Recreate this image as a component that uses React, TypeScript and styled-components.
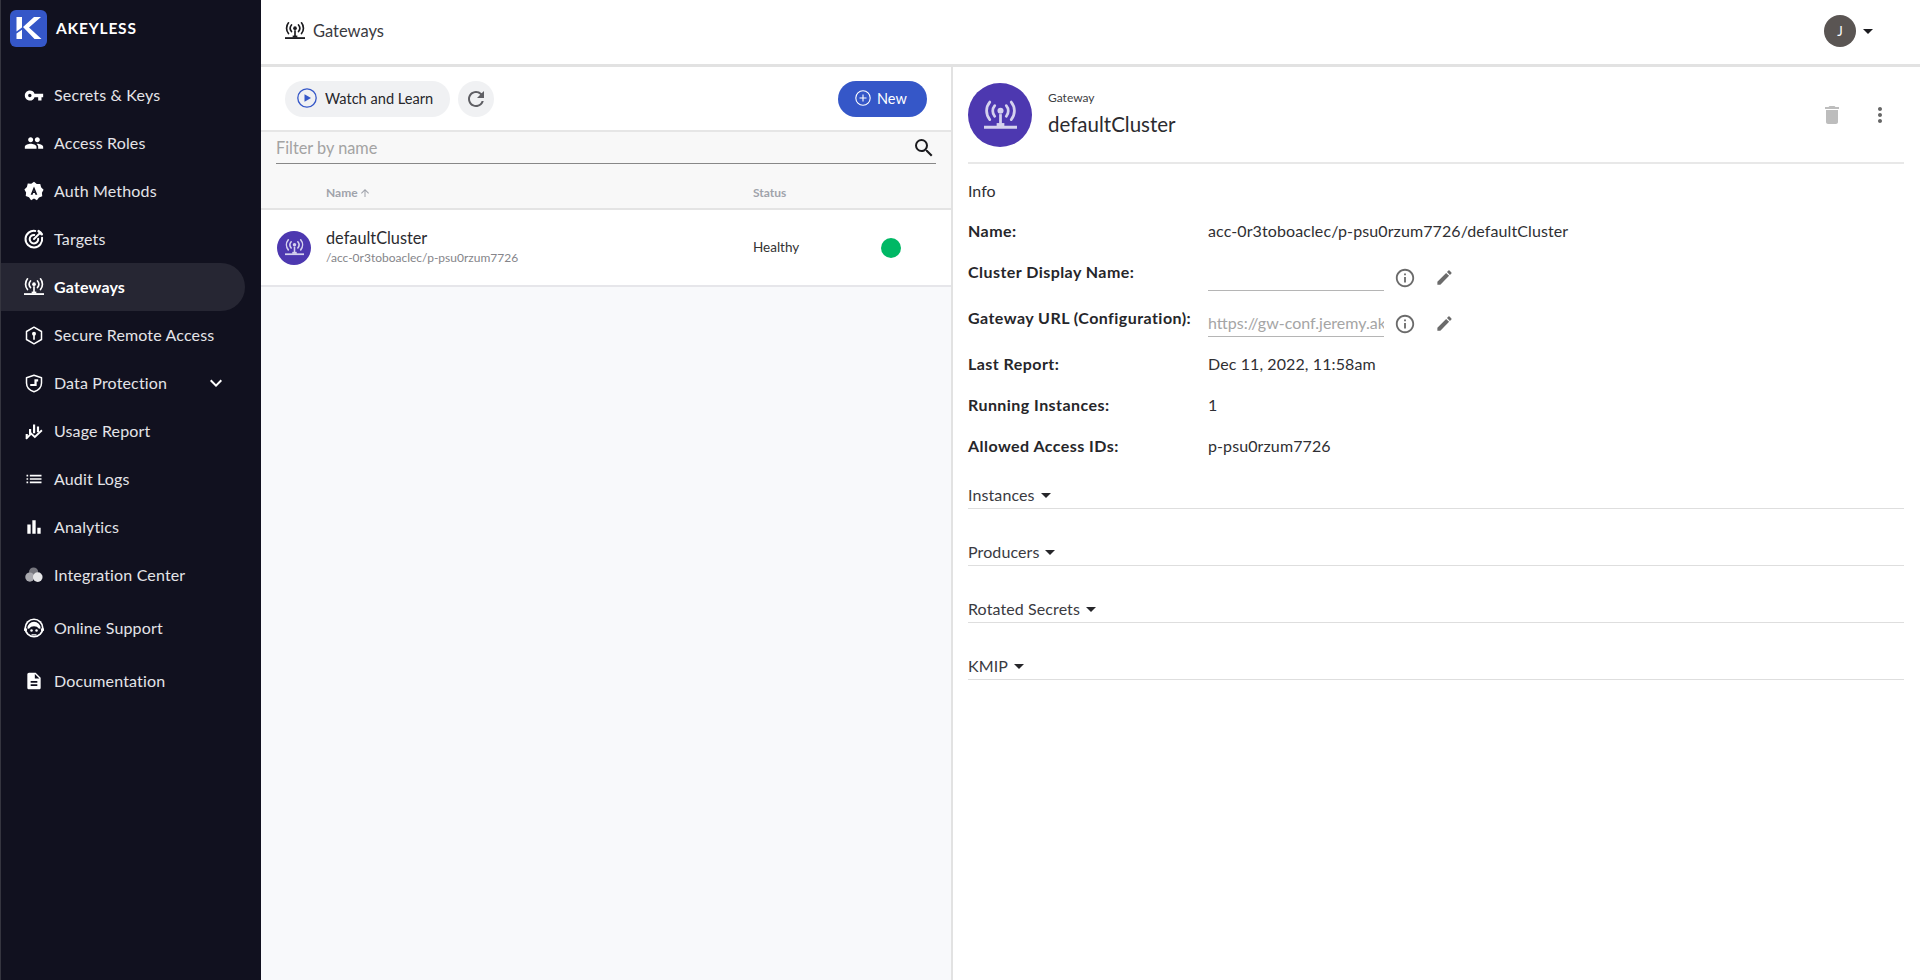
import * as React from "react";
import styled, { createGlobalStyle } from "styled-components";
import {
  MdVpnKey, MdPeople, MdList, MdBarChart, MdDescription, MdExpandMore, MdRefresh, MdSearch,
  MdDelete, MdMoreVert, MdEdit, MdInfoOutline, MdArrowUpward, MdArrowDropDown,
} from "react-icons/md";

const FONT = `"Lato", "Open Sans", sans-serif`;

const GlobalStyle = createGlobalStyle`
  html, body { margin: 0; padding: 0; height: 100%; }
  body { font-family: ${FONT}; color: #2b2b2f; background: #fff; }
  * { box-sizing: border-box; }
`;

const GatewayIcon = ({ size = 20, color = "currentColor" }: { size?: number; color?: string }) => (
  <svg width={size} height={size} viewBox="0 0 24 24" fill="none">
    <circle cx="12" cy="8.6" r="2.200" fill={color} />
    <path d="M7.800 4.800a6 6 0 0 0 0 7.800M16.200 4.800a6 6 0 0 1 0 7.800" stroke={color} strokeWidth="2" strokeLinecap="round" />
    <path d="M4.200 2.200a10 10 0 0 0 0 12.800M19.800 2.200a10 10 0 0 1 0 12.800" stroke={color} strokeWidth="2" strokeLinecap="round" />
    <path d="M11 11h2v7h-2z" fill={color} />
    <path d="M0 19.400h24v2.200H0z" fill={color} />
    <path d="M9.200 17.500h5.600v2.500H9.200z" fill={color} />
  </svg>
);

const AuthIcon = () => (
  <svg width="20" height="20" viewBox="0 0 24 24">
    <path fill="#fff" fillRule="evenodd" d="M12 1l3.300 2.600 4.200-.1 1 4 3 3-2 3.700.4 4.200-3.900 1.500L15.500 23 12 21l-3.500 2-2.500-3.500-3.900-1.500.4-4.200-2-3.700 3-3 1-4 4.200.1z M12 6.500 8 16.500h2.300l.7-2h2l.7 2H16z M11.600 12.700l.4-1.700.4 1.700z" />
  </svg>
);

const TargetIcon = () => (
  <svg width="22" height="22" viewBox="0 0 24 24" fill="none" stroke="#fff" strokeWidth="2.400" strokeLinecap="round">
    <path d="M21.700 10.500A10 10 0 1 1 13.500 2.300" />
    <path d="M17 11.800a5.100 5.100 0 1 1-4.700-4.700" />
    <path d="M12 12l8-8" />
    <path d="M17.500 2.500l3.800 3.800" strokeWidth="3" />
  </svg>
);

const RemoteIcon = () => (
  <svg width="21" height="21" viewBox="0 0 24 24" fill="none">
    <path d="M12 2l9 5.200v9.600L12 22l-9-5.200V7.200z" stroke="#fff" strokeWidth="1.800" strokeLinejoin="round" />
    <circle cx="12" cy="9.800" r="2.400" fill="#fff" />
    <path d="M11 11h2v6h-2z" fill="#fff" />
  </svg>
);

const ShieldIcon = () => (
  <svg width="21" height="21" viewBox="0 0 24 24" fill="none">
    <path d="M12 2l9 3v6.500c0 5-3.800 8.800-9 10.500-5.200-1.700-9-5.500-9-10.500V5z" stroke="#fff" strokeWidth="1.800" strokeLinejoin="round" />
    <path d="M7.500 12.500h5V7H17v2.500h-1.800V15H7.500z" fill="#fff" />
  </svg>
);

const UsageIcon = () => (
  <svg width="21" height="21" viewBox="0 0 24 24" fill="#fff">
    <path d="M6 9h2.600v6H6zM10.800 3.500h2.600v10.500h-2.600zM15.500 6h2.600v7h-2.600z" />
    <path d="M2.500 21l6-6.500 4.500 4 8.500-8" fill="none" stroke="#fff" strokeWidth="2.200" />
    <path d="M2 15h2.600v5H2z" />
  </svg>
);

const IntegrationIcon = () => (
  <svg width="20" height="20" viewBox="0 0 24 24">
    <circle cx="11.500" cy="8.500" r="5.500" fill="#77777f" />
    <circle cx="7" cy="14.500" r="5.500" fill="#a9a9af" />
    <circle cx="16.500" cy="14.500" r="5.800" fill="#e6e6e8" />
  </svg>
);

const SupportIcon = () => (
  <svg width="22" height="22" viewBox="0 0 24 24">
    <circle cx="12" cy="12" r="11.500" fill="#fff" />
    <circle cx="12" cy="12" r="9.500" fill="#11111f" />
    <path d="M4 12.500a8 8 0 0 1 16 0l-2 .5c-1.500-2-3.500-3-6-3s-4.500 1-6 3z" fill="#fff" />
    <circle cx="1.800" cy="14" r="2" fill="#fff" />
    <circle cx="22.200" cy="14" r="2" fill="#fff" />
    <circle cx="9" cy="15" r="1.500" fill="#fff" />
    <circle cx="15" cy="15" r="1.500" fill="#fff" />
    <path d="M9 19.500h6v1.500H9z" fill="#fff" />
  </svg>
);

const LogoMark = () => (
  <svg width="37" height="37" viewBox="0 0 37 37">
    <rect width="37" height="37" rx="6" fill="#3557c8" />
    <path d="M6.500 7H12v10.500l-5.500 4zM6.500 23.500 12 19.700V29H6.500z" fill="#fff" />
    <path d="M13 17 24 7h7L19 17.500 31.500 29H24.500z" fill="#fff" />
  </svg>
);

const Page = styled.div`
  display: flex;
  width: 1920px;
  height: 980px;
  overflow: hidden;
  font-size: 16px;
`;

const Sidebar = styled.aside`
  width: 261px;
  flex-shrink: 0;
  background: #11111f;
  border-left: 1px solid #35353f;
  display: flex;
  flex-direction: column;
`;

const Brand = styled.div`
  height: 71px;
  padding: 10px 0 0 9px;
  display: flex;
  align-items: flex-start;
  gap: 9px;
`;

const BrandName = styled.span`
  color: #fff;
  font-weight: 700;
  font-size: 15.500px;
  letter-spacing: 0.800px;
  line-height: 36px;
`;

const NavItem = styled.div<{ $active?: boolean; $gapTop?: number }>`
  height: 48px;
  width: 244px;
  margin-top: ${(p) => p.$gapTop ?? 0}px;
  padding: 0 17px 0 23px;
  display: flex;
  align-items: center;
  gap: 10px;
  color: ${(p) => (p.$active ? "#fff" : "#e4e4e8")};
  font-weight: ${(p) => (p.$active ? 700 : 400)};
  font-size: 16px;
  letter-spacing: 0.150px;
  background: ${(p) => (p.$active ? "#262633" : "transparent")};
  border-radius: ${(p) => (p.$active ? "0 24px 24px 0" : "0")};
`;

const NavIcon = styled.span`
  width: 20px;
  height: 20px;
  display: flex;
  align-items: center;
  justify-content: center;
  color: #fff;
  flex-shrink: 0;
`;

const NavLabel = styled.span`
  flex: 1;
  white-space: nowrap;
  margin-top: -2px;
`;

const Main = styled.main`
  flex: 1;
  display: flex;
  flex-direction: column;
  min-width: 0;
`;

const TopBar = styled.header`
  height: 67px;
  flex-shrink: 0;
  border-bottom: 3px solid #e2e2e2;
  display: flex;
  align-items: center;
  padding: 0 40px 3px 24px;
  gap: 8px;
  font-size: 16.500px;
  color: #3a3a3f;
`;

const Spacer = styled.div`
  flex: 1;
`;

const UserAvatar = styled.div`
  width: 32px;
  height: 32px;
  border-radius: 50%;
  background: #5a5553;
  color: #fff;
  font-size: 13px;
  display: flex;
  align-items: center;
  justify-content: center;
`;

const UserCaret = styled.span`
  display: flex;
  margin-left: -8px;
  color: #1b1b1f;
`;

const Panels = styled.div`
  flex: 1;
  display: flex;
  min-height: 0;
`;

const ListPanel = styled.section`
  width: 692px;
  flex-shrink: 0;
  border-right: 2px solid #e2e2e2;
  display: flex;
  flex-direction: column;
  background: #f8f9fb;
`;

const Toolbar = styled.div`
  height: 65px;
  background: #fff;
  border-bottom: 2px solid #e6e6e6;
  padding: 14px 24px 0 24px;
  display: flex;
  align-items: flex-start;
  gap: 8px;
`;

const PillButton = styled.button`
  height: 36px;
  padding: 0 17px 2px 12px;
  border: 0;
  border-radius: 18px;
  background: #f0f1f3;
  color: #26262a;
  font-family: ${FONT};
  font-size: 14.600px;
  display: flex;
  align-items: center;
  gap: 8px;
`;

const RoundButton = styled.button`
  width: 36px;
  height: 36px;
  padding: 0;
  border: 0;
  border-radius: 50%;
  background: #f0f1f3;
  color: #5f5f64;
  display: flex;
  align-items: center;
  justify-content: center;
`;

const NewButton = styled.button`
  height: 36px;
  width: 89px;
  margin-left: auto;
  padding: 0 0 2px 17px;
  border: 0;
  border-radius: 18px;
  background: #3557c8;
  color: #fff;
  font-family: ${FONT};
  font-size: 14.500px;
  display: flex;
  align-items: center;
  gap: 6px;
`;

const FilterBand = styled.div`
  background: #f8f8f8;
  padding: 0 15px 0 15px;
`;

const FilterField = styled.div`
  height: 32px;
  display: flex;
  align-items: center;
  justify-content: space-between;
  border-bottom: 1px solid #888;
  color: #a3a3a3;
  font-size: 16.300px;
  svg { color: #1b1b1f; }
`;

const TableGrid = styled.div`
  display: grid;
  grid-template-columns: 65px 427px 1fr;
  align-items: center;
`;

const TableHead = styled(TableGrid)`
  height: 46px;
  background: #f8f8f8;
  border-bottom: 2px solid #e4e4e4;
  color: #a0a3ab;
  font-size: 12px;
  font-weight: 700;
  padding-top: 13px;
`;

const SortLabel = styled.span`
  display: flex;
  align-items: center;
  gap: 1px;
`;

const TableRow = styled(TableGrid)`
  height: 77px;
  background: #fff;
  border-bottom: 2px solid #e6e6ea;
`;

const RowLeading = styled.div`
  padding-left: 16px;
`;

const Avatar = styled.div<{ $size: number }>`
  width: ${(p) => p.$size}px;
  height: ${(p) => p.$size}px;
  border-radius: 50%;
  background: #4d38b0;
  color: #d5d2ee;
  display: flex;
  align-items: center;
  justify-content: center;
  flex-shrink: 0;
`;

const RowText = styled.div`
  padding-top: 0;
`;

const RowName = styled.div`
  font-size: 16.300px;
  line-height: 20px;
  color: #2b2b2f;
`;

const RowPath = styled.div`
  font-size: 12px;
  line-height: 20px;
  color: #85858a;
`;

const StatusCell = styled.div`
  display: flex;
  align-items: center;
  justify-content: space-between;
  padding-right: 50px;
  font-size: 13.500px;
  color: #333;
`;

const StatusLabel = styled.span`
  margin-top: -2px;
`;

const StatusDot = styled.span`
  width: 20px;
  height: 20px;
  border-radius: 50%;
  background: #00b865;
`;

const DetailPanel = styled.section`
  flex: 1;
  min-width: 0;
  padding: 16px 16px 0 15px;
  display: flex;
  flex-direction: column;
`;

const DetailHead = styled.div`
  height: 81px;
  border-bottom: 2px solid #e8e8e8;
  display: flex;
  align-items: flex-start;
  gap: 16px;
`;

const TitleBlock = styled.div`
  padding-top: 7px;
  flex: 1;
`;

const TitleKicker = styled.div`
  font-size: 12px;
  line-height: 16px;
  color: #3d3d42;
`;

const TitleName = styled.div`
  font-size: 20.500px;
  line-height: 28px;
  margin-top: 4px;
  color: #2b2b2f;
`;

const HeadActions = styled.div`
  display: flex;
  gap: 24px;
  padding: 20px 12px 0 0;
`;

const InfoTitle = styled.div`
  margin: 17px 0 9px;
  font-size: 16px;
  line-height: 20px;
  color: #2f2f33;
`;

const FieldRow = styled.div<{ $height: number }>`
  display: grid;
  grid-template-columns: 240px 176px auto;
  align-items: center;
  height: ${(p) => p.$height}px;
`;

const FieldLabel = styled.div<{ $raised?: boolean }>`
  font-weight: 700;
  letter-spacing: 0.450px;
  color: #26262a;
  white-space: nowrap;
  padding-bottom: ${(p) => (p.$raised ? 6 : 0)}px;
`;

const FieldValue = styled.div`
  white-space: nowrap;
  letter-spacing: 0.100px;
  color: #2f2f33;
`;

const FieldInput = styled.div`
  height: 32px;
  margin-top: 2px;
  padding-top: 2px;
  line-height: 32px;
  border-bottom: 1px solid #b5b5b5;
  color: #a5a5a5;
  overflow: hidden;
  white-space: nowrap;
`;

const FieldTools = styled.div`
  display: flex;
  align-items: center;
  gap: 19px;
  padding: 7px 0 0 10px;
  color: #6b6b6b;
`;

const SectionList = styled.div`
  margin-top: -14px;
`;

const SectionHead = styled.div`
  height: 57px;
  padding-bottom: 1px;
  display: flex;
  align-items: flex-end;
  border-bottom: 1px solid #dedede;
  font-size: 16px;
  letter-spacing: 0.100px;
  line-height: 24px;
  color: #3a3a3f;
  svg { color: #26262a; margin-left: -1px; }
`;

const NAV = [
  { label: "Secrets & Keys", icon: <MdVpnKey size={21} /> },
  { label: "Access Roles", icon: <MdPeople size={22} /> },
  { label: "Auth Methods", icon: <AuthIcon /> },
  { label: "Targets", icon: <TargetIcon /> },
  { label: "Gateways", icon: <GatewayIcon />, active: true },
  { label: "Secure Remote Access", icon: <RemoteIcon /> },
  { label: "Data Protection", icon: <ShieldIcon />, more: true },
  { label: "Usage Report", icon: <UsageIcon /> },
  { label: "Audit Logs", icon: <MdList size={20} /> },
  { label: "Analytics", icon: <MdBarChart size={20} /> },
  { label: "Integration Center", icon: <IntegrationIcon /> },
  { label: "Online Support", icon: <SupportIcon />, gapTop: 5 },
  { label: "Documentation", icon: <MdDescription size={20} />, gapTop: 5 },
];

export default function App() {
  return (
    <Page>
      <GlobalStyle />
      <Sidebar>
        <Brand>
          <LogoMark />
          <BrandName>AKEYLESS</BrandName>
        </Brand>
        {NAV.map((item) => (
          <NavItem key={item.label} $active={item.active} $gapTop={item.gapTop}>
            <NavIcon>{item.icon}</NavIcon>
            <NavLabel>{item.label}</NavLabel>
            {item.more && <MdExpandMore size={24} color="#fff" />}
          </NavItem>
        ))}
      </Sidebar>
      <Main>
        <TopBar>
          <GatewayIcon size={20} color="#1b1b1f" />
          <span>Gateways</span>
          <Spacer />
          <UserAvatar>J</UserAvatar>
          <UserCaret><MdArrowDropDown size={24} /></UserCaret>
        </TopBar>
        <Panels>
          <ListPanel>
            <Toolbar>
              <PillButton>
                <svg width="20" height="20" viewBox="0 0 20 20" fill="none">
                  <circle cx="10" cy="10" r="9.200" stroke="#3557c8" strokeWidth="1.300" />
                  <path d="M7.500 6.300 14 10l-6.500 3.700z" fill="#3557c8" />
                </svg>
                Watch and Learn
              </PillButton>
              <RoundButton><MdRefresh size={24} /></RoundButton>
              <NewButton>
                <svg width="16" height="16" viewBox="0 0 16 16" fill="none" stroke="#fff" strokeWidth="1.100">
                  <circle cx="8" cy="8" r="7.200" />
                  <path d="M8 4.500v7M4.500 8h7" />
                </svg>
                New
              </NewButton>
            </Toolbar>
            <FilterBand>
              <FilterField>
                Filter by name
                <MdSearch size={24} />
              </FilterField>
            </FilterBand>
            <TableHead>
              <span />
              <SortLabel>Name <MdArrowUpward size={12} /></SortLabel>
              <span>Status</span>
            </TableHead>
            <TableRow>
              <RowLeading>
                <Avatar $size={34}><GatewayIcon size={19} /></Avatar>
              </RowLeading>
              <RowText>
                <RowName>defaultCluster</RowName>
                <RowPath>/acc-0r3toboaclec/p-psu0rzum7726</RowPath>
              </RowText>
              <StatusCell>
                <StatusLabel>Healthy</StatusLabel>
                <StatusDot />
              </StatusCell>
            </TableRow>
          </ListPanel>
          <DetailPanel>
            <DetailHead>
              <Avatar $size={64}><GatewayIcon size={33} /></Avatar>
              <TitleBlock>
                <TitleKicker>Gateway</TitleKicker>
                <TitleName>defaultCluster</TitleName>
              </TitleBlock>
              <HeadActions>
                <MdDelete size={24} color="#bdbdbd" />
                <MdMoreVert size={24} color="#666" />
              </HeadActions>
            </DetailHead>
            <InfoTitle>Info</InfoTitle>
            <FieldRow $height={41}>
              <FieldLabel>Name:</FieldLabel>
              <FieldValue>acc-0r3toboaclec/p-psu0rzum7726/defaultCluster</FieldValue>
            </FieldRow>
            <FieldRow $height={46}>
              <FieldLabel $raised>Cluster Display Name:</FieldLabel>
              <FieldInput />
              <FieldTools>
                <MdInfoOutline size={22} />
                <MdEdit size={19} />
              </FieldTools>
            </FieldRow>
            <FieldRow $height={46}>
              <FieldLabel $raised>Gateway URL (Configuration):</FieldLabel>
              <FieldInput>https://gw-conf.jeremy.akeyless</FieldInput>
              <FieldTools>
                <MdInfoOutline size={22} />
                <MdEdit size={19} />
              </FieldTools>
            </FieldRow>
            <FieldRow $height={41}>
              <FieldLabel>Last Report:</FieldLabel>
              <FieldValue>Dec 11, 2022, 11:58am</FieldValue>
            </FieldRow>
            <FieldRow $height={41}>
              <FieldLabel>Running Instances:</FieldLabel>
              <FieldValue>1</FieldValue>
            </FieldRow>
            <FieldRow $height={41}>
              <FieldLabel>Allowed Access IDs:</FieldLabel>
              <FieldValue>p-psu0rzum7726</FieldValue>
            </FieldRow>
            <SectionList>
              {["Instances", "Producers", "Rotated Secrets", "KMIP"].map((name) => (
                <SectionHead key={name}>
                  {name}
                  <MdArrowDropDown size={24} />
                </SectionHead>
              ))}
            </SectionList>
          </DetailPanel>
        </Panels>
      </Main>
    </Page>
  );
}
